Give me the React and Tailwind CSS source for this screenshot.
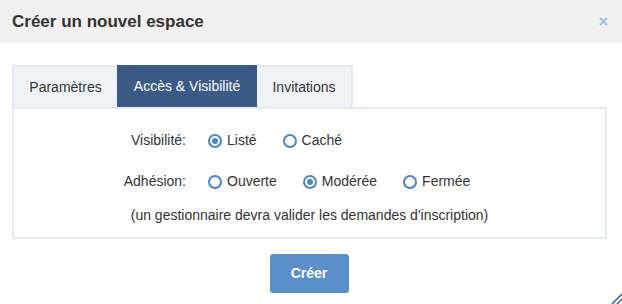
import React, { useState } from 'react';

const Radio = ({ checked, label, onClick }) => (
  <button type="button" onClick={onClick} className="flex items-center gap-[5px] text-[14px] text-[#333]">
    <span className="flex h-[14px] w-[14px] items-center justify-center rounded-full border-2 border-[#4a86c8] bg-white">
      {checked && <span className="h-[6px] w-[6px] rounded-full bg-[#4a86c8]" />}
    </span>
    <span>{label}</span>
  </button>
);

const App = () => {
  const [tab, setTab] = useState('acces');
  const [visibility, setVisibility] = useState('liste');
  const [adhesion, setAdhesion] = useState('moderee');

  const tabs = [
    { id: 'params', label: 'Paramètres', width: 'w-[105px]' },
    { id: 'acces', label: 'Accès & Visibilité', width: 'w-[140px]' },
    { id: 'invit', label: 'Invitations', width: 'w-[96px]' }
  ];

  return (
    <div className="relative h-[304px] w-[622px] overflow-hidden bg-white" style={{ fontFamily: '"Liberation Sans", Arial, sans-serif' }}>
      {/* Header */}
      <div className="flex h-[43px] items-center justify-between bg-[#f1f1f1] pl-[12px] pr-[14px]">
        <h1 className="text-[17px] font-bold text-[#333]">Créer un nouvel espace</h1>
        <button type="button" className="text-[#a3bee2]">
          <svg width="9" height="9" viewBox="0 0 9 9">
            <path d="M1 1 L8 8 M8 1 L1 8" stroke="currentColor" strokeWidth="2" />
          </svg>
        </button>
      </div>

      <div className="px-[12px] pt-[22px]">
        {/* Tabs */}
        <div className="flex">
          {tabs.map((t) => (
            <button
              key={t.id}
              type="button"
              onClick={() => setTab(t.id)}
              className={`flex h-[42px] items-center justify-center text-[14px] ${t.width} ${
                tab === t.id
                  ? 'bg-[#3b5a85] text-white'
                  : 'border-2 border-b-0 border-[#e2e9f0] bg-[#eff3f7] text-[#333] first:border-r-0 last:border-l-0'
              }`}
            >
              {t.label}
            </button>
          ))}
        </div>

        {/* Panel */}
        <div className="h-[132px] w-[595px] border-2 border-[#e2e9f0] pt-[21px]">
          <div className="flex items-center pl-[108px]">
            <span className="w-[64px] text-right text-[14px] text-[#333]">Visibilité:</span>
            <div className="ml-[22px] flex items-center gap-[26px]">
              <Radio checked={visibility === 'liste'} label="Listé" onClick={() => setVisibility('liste')} />
              <Radio checked={visibility === 'cache'} label="Caché" onClick={() => setVisibility('cache')} />
            </div>
          </div>
          <div className="mt-[20px] flex items-center pl-[108px]">
            <span className="w-[64px] text-right text-[14px] text-[#333]">Adhésion:</span>
            <div className="ml-[22px] flex items-center gap-[26px]">
              <Radio checked={adhesion === 'ouverte'} label="Ouverte" onClick={() => setAdhesion('ouverte')} />
              <Radio checked={adhesion === 'moderee'} label="Modérée" onClick={() => setAdhesion('moderee')} />
              <Radio checked={adhesion === 'fermee'} label="Fermée" onClick={() => setAdhesion('fermee')} />
            </div>
          </div>
          <p className="mt-[13px] text-center text-[14px] text-[#333]">
            (un gestionnaire devra valider les demandes d'inscription)
          </p>
        </div>

        {/* Footer */}
        <div className="flex justify-center pr-[4px] pt-[15px]">
          <button type="button" className="h-[39px] w-[79px] rounded-[3px] bg-[#5b8fc9] text-[14px] font-bold text-white">
            Créer
          </button>
        </div>
      </div>

      {/* Resize grip */}
      <svg className="absolute bottom-0 right-0" width="14" height="14" viewBox="0 0 14 14">
        <path d="M14 4 L4 14 M14 9 L9 14" stroke="#3b5a85" strokeWidth="1.5" />
      </svg>
    </div>
  );
};

export default App;
